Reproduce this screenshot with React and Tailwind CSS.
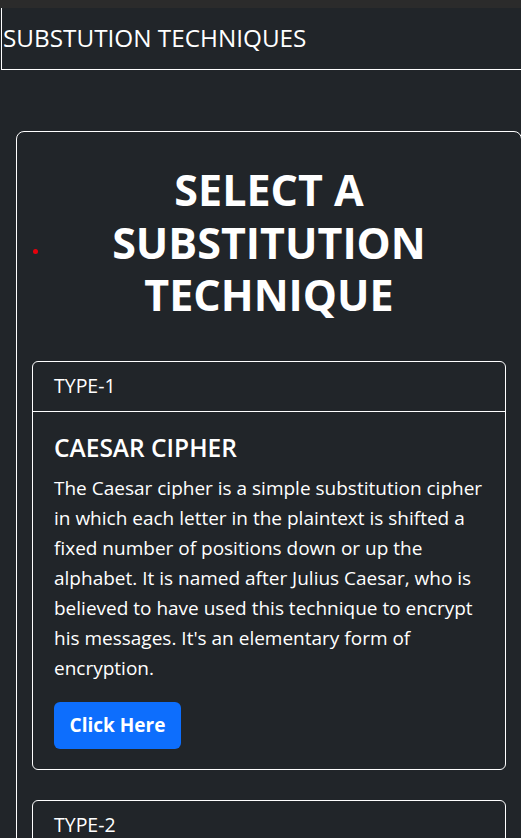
import React from 'react';

const techniques = [
  {
    type: 'TYPE-1',
    title: 'CAESAR CIPHER',
    text: "The Caesar cipher is a simple substitution cipher in which each letter in the plaintext is shifted a fixed number of positions down or up the alphabet. It is named after Julius Caesar, who is believed to have used this technique to encrypt his messages. It's an elementary form of encryption.",
  },
  {
    type: 'TYPE-2',
    title: 'PLAYFAIR CIPHER',
    text: 'The Playfair cipher encrypts pairs of letters using a 5x5 grid of letters built from a keyword.',
  },
];

function TechniqueCard({ item }) {
  return (
    <div className="border border-white rounded-md mb-[30px]">
      <div className="h-[50px] flex items-center px-[21px] border-b border-white text-[19.5px]">
        {item.type}
      </div>
      <div className="px-[21px] pt-[21px] pb-[20px]">
        <h5 className="text-[24.5px] leading-[29px] font-semibold">{item.title}</h5>
        <p className="mt-[11px] text-[19px] leading-[30px]">{item.text}</p>
        <button className="mt-[19px] h-[47px] w-[127px] rounded-md bg-[#0d6efd] text-white text-[19px] font-bold">
          Click Here
        </button>
      </div>
    </div>
  );
}

export default function App() {
  return (
    <div
      className="min-h-screen bg-[#212529] text-white overflow-hidden"
      style={{ fontFamily: '"Open Sans", "Noto Sans", sans-serif' }}
    >
      <div className="h-2 bg-[#2b2b2b]" />
      <div className="ml-px h-[62px] border-l border-b border-white flex items-center">
        <h4 className="pl-px text-[24.3px] font-medium">SUBSTUTION TECHNIQUES</h4>
      </div>

      <div className="pt-[61px] pl-4">
        <div className="relative w-[506px] border border-white rounded-lg px-[15px] pt-8">
          <span className="absolute left-[16px] top-[117px] h-[5px] w-[5px] rounded-full bg-red-600" />
          <h1 className="text-center text-[43px] leading-[52.5px] font-bold px-12">
            SELECT A SUBSTITUTION TECHNIQUE
          </h1>
          <div className="mt-[39px]">
            {techniques.map((t) => (
              <TechniqueCard key={t.type} item={t} />
            ))}
          </div>
        </div>
      </div>
    </div>
  );
}
